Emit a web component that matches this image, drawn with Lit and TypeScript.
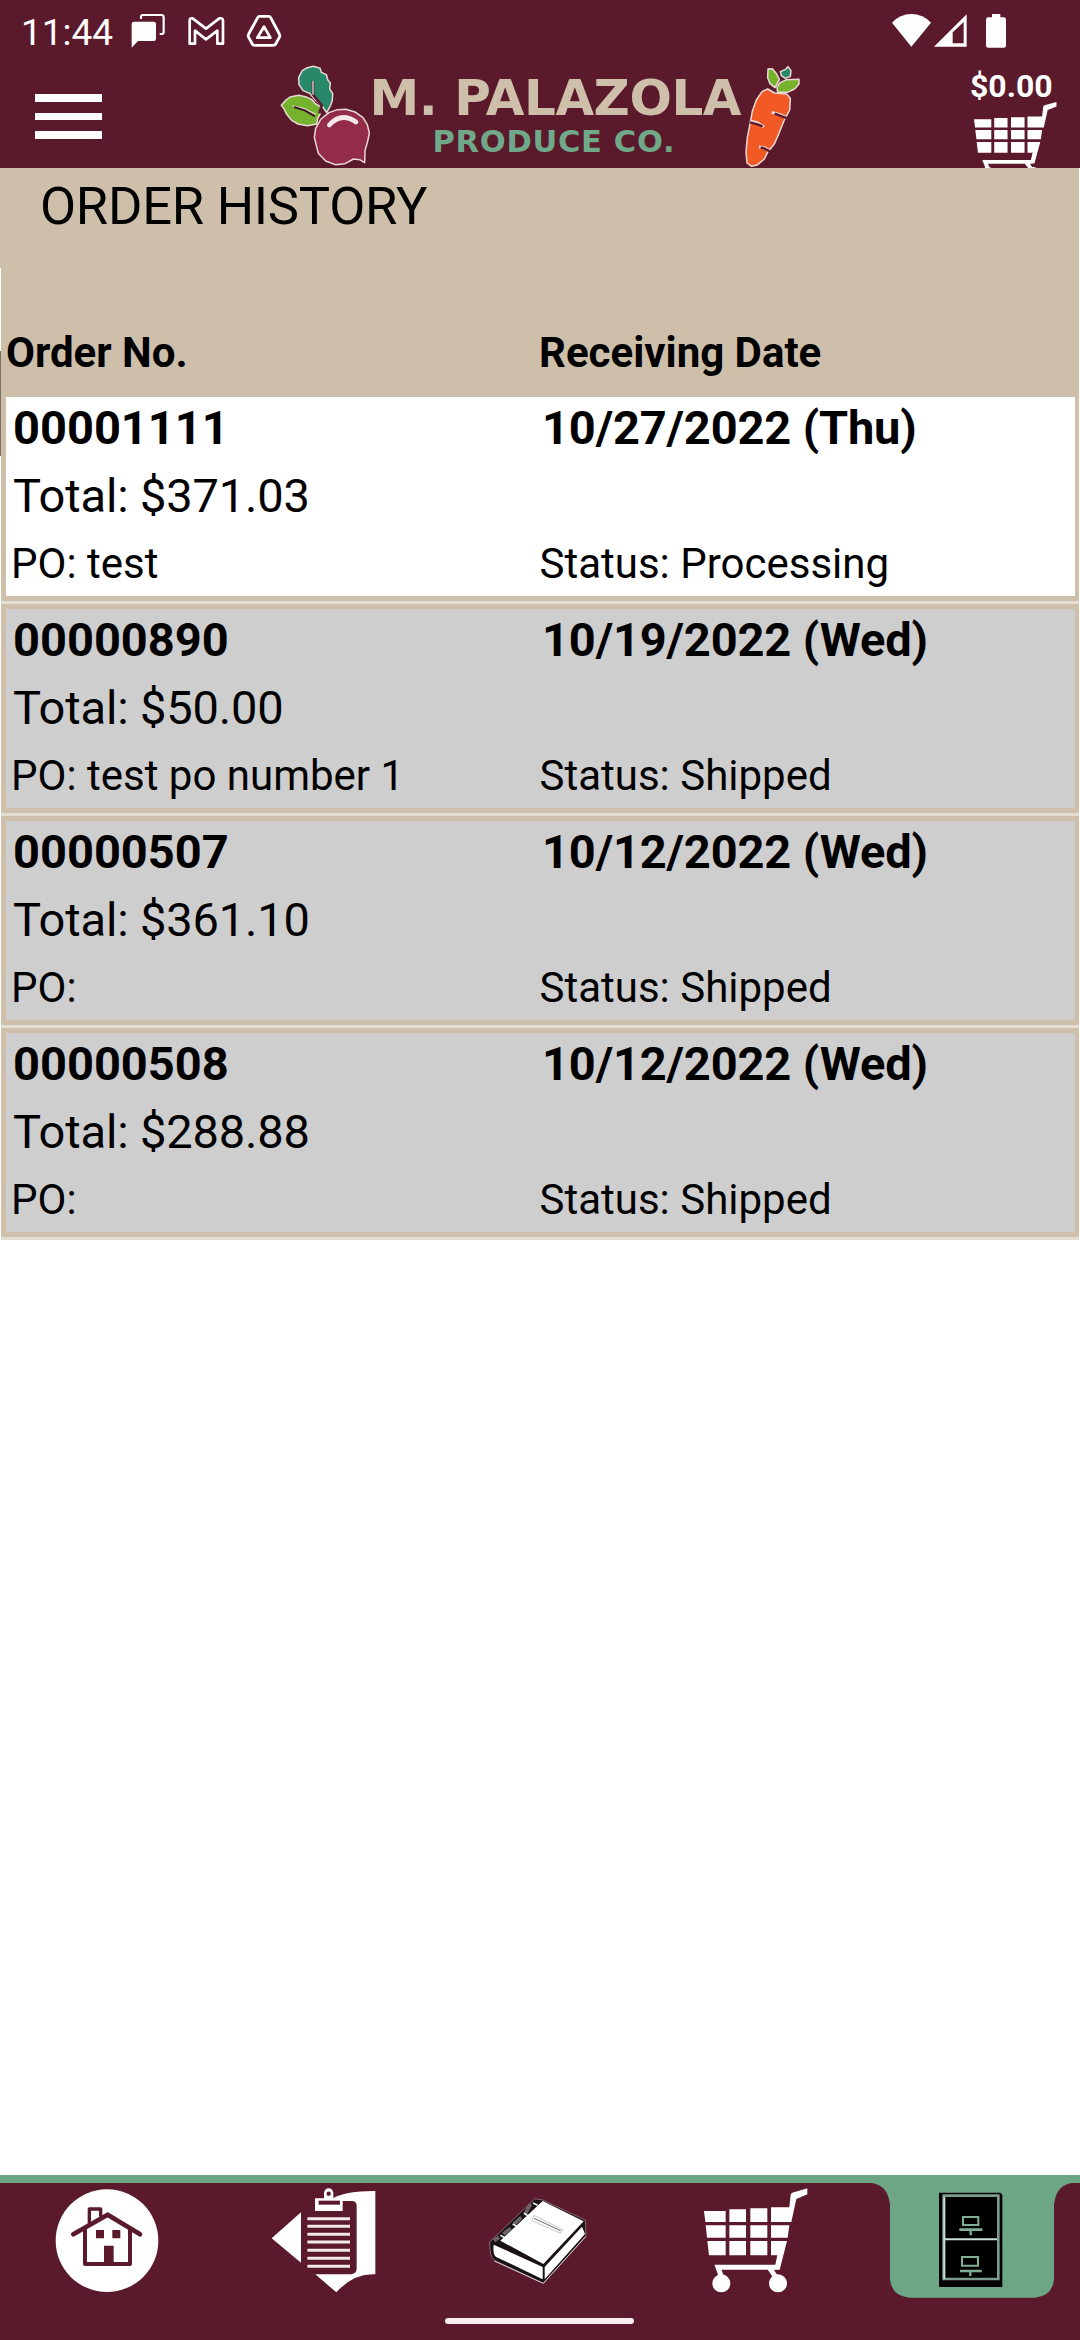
import { LitElement, html, css, svg } from "lit";
import { customElement } from "lit/decorators.js";
import { classMap } from "lit/directives/class-map.js";

interface Order {
  no: string;
  date: string;
  total: string;
  po: string;
  status: string;
}

const ORDERS: Order[] = [
  { no: "00001111", date: "10/27/2022 (Thu)", total: "$371.03", po: "test", status: "Processing" },
  { no: "00000890", date: "10/19/2022 (Wed)", total: "$50.00", po: "test po number 1", status: "Shipped" },
  { no: "00000507", date: "10/12/2022 (Wed)", total: "$361.10", po: "", status: "Shipped" },
  { no: "00000508", date: "10/12/2022 (Wed)", total: "$288.88", po: "", status: "Shipped" },
];

const cartShape = svg`
  <g fill="#fff">
    <path d="M912 153H977V186H916ZM988 148H1038V186H988ZM1051 145H1102V186H1051ZM1113 142H1168L1172 104Q1173 100 1177 98L1222 85V103L1189 117L1174 186H1113Z"/>
    <path d="M917 196H977V233H921ZM988 196H1038V233H988ZM1051 196H1102V233H1051ZM1113 196H1168L1163 233H1113Z"/>
    <path d="M922 243H977V286H927ZM988 243H1038V286H988ZM1051 243H1102V286H1051ZM1113 243H1161L1139 329H1123L1132 286H1113Z"/>
    <circle cx="964" cy="370" r="27"/>
    <circle cx="1134" cy="370" r="27"/>
  </g>
  <path d="M964 350L954 322H1128M1110 326L1128 352" fill="none" stroke="#fff" stroke-width="15"/>`;

@customElement("status-bar")
class StatusBar extends LitElement {
  static styles = css`
    :host { display: flex; height: 62px; align-items: flex-start; color: #fff; }
    .time { margin-left: 21px; width: 109px; font-size: 37px; line-height: 66px; white-space: nowrap; }
    .icons { display: block; }
    .spacer { flex: 1; }
  `;
  render() {
    return html`
      <span class="time">11:44</span>
      <svg class="icons" width="155" height="62" viewBox="390 0 465 186">
        <path d="M423 57V51Q423 45 429 45H484Q491 45 491 52V96Q491 102 485 102H479" fill="none" stroke="#fff" stroke-width="6.5"/>
        <path d="M402 65H461Q468 65 468 72V116Q468 123 461 123H414L395 143V72Q395 65 402 65Z" fill="#fff"/>
        <path d="M569 131V62Q569 53 578 55L618 86L658 55Q669 53 669 62V131H652V92L618 118L585 92V131Z" fill="none" stroke="#fff" stroke-width="8" stroke-linejoin="round"/>
        <path d="M778 49H806Q810 49 812 53L838 102Q841 107 838 112L827 132Q825 136 820 136H763Q759 136 757 132L746 112Q743 107 746 102L773 53Q775 49 778 49Z" fill="none" stroke="#fff" stroke-width="8.5"/>
        <path d="M792 80L811 113H772Z" fill="none" stroke="#fff" stroke-width="8.5" stroke-linejoin="round"/>
      </svg>
      <span class="spacer"></span>
      <svg class="icons" width="220" height="62" viewBox="0 0 660 186">
        <path d="M96 68Q120 42 154 42Q189 42 213 68L154 140Z" fill="#fff"/>
        <path d="M222 140L320 43V140ZM278 97V130H311V66Z" fill="#fff" fill-rule="evenodd"/>
        <path d="M396 42H421V52H431Q438 52 438 59V137Q438 143 431 143H385Q378 143 378 137V59Q378 52 385 52H396Z" fill="#fff"/>
      </svg>
    `;
  }
}

@customElement("app-header")
class AppHeader extends LitElement {
  static styles = css`
    :host { display: flex; height: 106px; overflow: hidden; align-items: flex-start; color: #fff; }
    .menu { display: flex; flex-direction: column; gap: 11px; margin: 32px 0 0 35px; width: 67px; }
    .line { height: 7.6px; background: #fff; }
    .logo { display: block; margin-left: 173px; }
    .cart { margin-left: auto; width: 110px; display: flex; flex-direction: column; }
    .amount { height: 40px; font-size: 32px; font-weight: 700; line-height: 48px; white-space: nowrap; }
    .basket { display: block; margin-left: 4px; flex: none; }
  `;
  render() {
    return html`
      <div class="menu"><div class="line"></div><div class="line"></div><div class="line"></div></div>
      <svg class="logo" width="535" height="106" viewBox="275 62 535 106">
        <g transform="translate(270 50) scale(.33333)" stroke="#ead9d6" stroke-width="4.5" stroke-linejoin="round">
          <path d="M87 104L86 82L97 62L112 53L130 49L150 55L154 67L169 74L174 91L181 99L179 117L188 130L187 151L182 166L170 188L154 165L134 148L119 130L99 122Z" fill="#28896a"/>
          <path d="M34 166L46 152L60 141L86 136L107 140L126 149L137 162L151 169V191L143 206L140 222L112 227L84 222L65 211L50 193L43 178Z" fill="#74b32b"/>
          <path d="M133 262L137 235L153 207L177 188L202 179L228 178L257 187L279 203L292 224L298 249L293 274L285 302L284 338L269 329L251 327L225 341L196 344L167 333L145 310Z" fill="#932c48"/>
          <path d="M129 93V134L155 166L148 190" fill="none" stroke="#5a1a2b" stroke-width="8"/>
          <path d="M129 93V134M68 168L106 177L137 193" fill="none" stroke-width="4"/>
          <path d="M72 171L104 181L135 199" fill="none" stroke="#43152a" stroke-width="6"/>
          <path d="M178 225Q214 185 258 216" fill="none" stroke="#f6e7ea" stroke-width="14" stroke-linecap="round"/>
        </g>
        <text class="name" x="369.5" y="115.3" font-family="DejaVu Sans" font-weight="700" font-size="50" textLength="372" fill="#cebfab">M. PALAZOLA</text>
        <text class="sub" x="432.5" y="152" font-family="DejaVu Sans" font-weight="700" font-size="30.5" textLength="242" fill="#70a98a">PRODUCE CO.</text>
        <g transform="translate(540 50) scale(.33333)" stroke="#ead9d6" stroke-width="4.5" stroke-linejoin="round">
          <path d="M683 117L704 129L740 132L751 145L749 180L732 212L717 250L703 282L684 305L673 327L653 344L635 349L621 339L618 307L622 262L630 222L637 184L649 150L666 125Z" fill="#f15a24"/>
          <path d="M684 57L697 56L710 72L718 89L705 113L690 101L683 83Z" fill="#74b32b"/>
          <path d="M721 65L737 58L744 50L753 62L751 79L736 85L724 77Z" fill="#28896a"/>
          <path d="M711 112L720 98L740 89L777 88V102L764 117L742 127L713 127Z" fill="#74b32b"/>
          <path d="M695 187L718 193L738 202M632 214L652 218L672 231M657 290L672 293L687 301" fill="none" stroke-width="9"/>
          <path d="M704 191L720 197L742 205M630 217L652 223L668 229M662 292L674 296L689 304" fill="none" stroke="#5a1a2b" stroke-width="7"/>
        </g>
      </svg>
      <div class="cart">
        <span class="amount">$0.00</span>
        <svg class="basket" width="82.5" height="79" viewBox="912 85 310 313" preserveAspectRatio="none">${cartShape}</svg>
      </div>
    `;
  }
}

@customElement("order-card")
class OrderCard extends LitElement {
  static properties = { order: { attribute: false }, open: { type: Boolean } };
  declare order: Order;
  declare open: boolean;
  static styles = css`
    :host { display: block; border-bottom: 3px solid #e4ddd5; }
    .card {
      display: grid; grid-template-columns: 533.5px 1fr; grid-template-rows: 68px 68px 63px;
      border: 5px solid #cebfab; border-right-width: 4px; background: #cecece;
      line-height: 61px; font-size: 42px; white-space: nowrap; color: #000;
    }
    .open { background: #fff; }
    .key { font-size: 47px; font-weight: 700; padding-left: 7px; }
    .date { letter-spacing: -0.15px; padding-left: 2.5px; }
    .total { font-size: 47px; letter-spacing: -0.15px; grid-column: 1 / -1; padding-left: 7px; }
    .po { padding-left: 5px; }
  `;
  render() {
    const o = this.order;
    return html`
      <div class=${classMap({ card: true, open: this.open })}>
        <span class="key">${o.no}</span>
        <span class="key date">${o.date}</span>
        <span class="total">Total: ${o.total}</span>
        <span class="po">PO: ${o.po}</span>
        <span class="status">Status: ${o.status}</span>
      </div>
    `;
  }
}

@customElement("bottom-nav")
class BottomNav extends LitElement {
  static styles = css`
    :host {
      display: grid; grid-template-columns: repeat(5, 216px); height: 165px; position: relative;
      background: linear-gradient(#6ca684 0 8px, #5a1a2b 8px);
    }
    .tab { display: block; }
    .handle {
      position: absolute; left: 445px; bottom: 16px; width: 189px; height: 6px;
      border-radius: 3px; background: #f7ecef;
    }
  `;
  render() {
    return html`
      <svg class="tab" width="216" height="165" viewBox="0 45 648 495">
        <circle cx="321" cy="242" r="154" fill="#fff"/>
        <g fill="none" stroke="#5a1a2b" stroke-linejoin="round">
          <path d="M255 208V312H390V208" stroke-width="12"/>
          <path d="M268 196V147H302V170" stroke-width="10"/>
          <path d="M220 223L323 164L420 223" stroke-width="14" stroke-linecap="round"/>
        </g>
        <path d="M288 210H312V235H288ZM337 210H361V235H337ZM312 257H341V314H312Z" fill="#5a1a2b"/>
      </svg>
      <svg class="tab" width="216" height="165" viewBox="648 45 648 495">
        <g fill="#fff">
          <path d="M903 157V308L815 235Z"/>
          <path d="M1000 114Q1042 92 1126 93V343Q1060 340 1009 397L946 343H1054Q1070 341 1070 325V138Q1070 123 1055 123H1028Z"/>
          <path d="M945 115H972V99Q974 85 986 85Q998 85 1000 99V115H1028V153H945Z"/>
        </g>
        <circle cx="986" cy="101" r="6.5" fill="#5a1a2b"/>
        <path d="M956 122H1020V134H956Z" fill="#5a1a2b"/>
        <path d="M922 176H1050M922 199H1050M922 223H1050M922 246H1050M922 271H1050M922 295H1050M922 319H1050" stroke="#f3e8eb" stroke-width="9"/>
      </svg>
      <svg class="tab" width="216" height="165" viewBox="96 45 648 495">
        <path d="M405 116L428 120L556 180L558 228L430 370L283 301Q268 290 269 246Z" fill="#1a1316" stroke="#8b6b75" stroke-width="3" stroke-linejoin="round"/>
        <path d="M392 132L374 164M364 172L342 192M332 205L310 222M297 232L282 242" stroke="#6d6468" stroke-width="11"/>
        <path d="M399 129L413 136M372 160L384 167M338 192L352 200M301 226L316 234" stroke="#eee" stroke-width="5"/>
        <path d="M428 123L551 184L430 312L301 242Z" fill="#fff"/>
        <path d="M281 254L428 321V358L287 290Q278 280 281 254Z" fill="#fff"/>
        <path d="M434 321L546 200L555 222L434 358Z" fill="#fff"/>
        <path d="M283 303L430 370L557 230" fill="none" stroke="#d8cfd2" stroke-width="3"/>
        <path d="M402 166L490 210L482 220L396 182Z" fill="#fff" stroke="#c8c8c8" stroke-width="3"/>
        <path d="M402 175L482 212" stroke="#666" stroke-width="3"/>
      </svg>
      <svg class="tab" width="216" height="165" viewBox="744 45 648 495">${cartShape}</svg>
      <svg class="tab" width="216" height="165" viewBox="72 45 648 495">
        <path d="M72 45H720V69H696Q648 75 642 135V356Q638 408 585 413H208Q154 408 150 356V135Q144 75 94 69H72Z" fill="#6ca684"/>
        <path d="M297 98H481L487 104V381H297Z" fill="#000"/>
        <path d="M311 107H475V357H311Z" fill="none" stroke="#7c9c8b" stroke-width="8"/>
        <path d="M313 112V357M311 238H471" stroke="#c9e0d2" stroke-width="6"/>
        <g fill="none" stroke="#7fae95">
          <path d="M369 171H415V195H369ZM366 291H414V317H366Z" stroke-width="6"/>
          <path d="M358 209H427M360 333H425" stroke-width="8"/>
          <path d="M392 212V226M391 336V348" stroke-width="7"/>
        </g>
      </svg>
      <div class="handle"></div>
    `;
  }
}

@customElement("app-root")
class AppRoot extends LitElement {
  static styles = css`
    :host {
      display: flex; flex-direction: column; width: 1080px; height: 2340px;
      background: #fff; font-family: Roboto, "Liberation Sans", sans-serif; overflow: hidden;
    }
    .top { background: #5a1a2b; height: 168px; flex: none; }
    .title {
      height: 100px; margin-right: 1px; padding-left: 40px; background: #cebfab; letter-spacing: -0.25px;
      font-size: 52.5px; line-height: 76px; color: #000; flex: none; box-sizing: border-box;
    }
    .table { flex: 1; position: relative; padding: 0 1px; }
    .heads {
      display: grid; grid-template-columns: 533px 1fr; height: 124px; box-sizing: border-box;
      padding: 54px 0 0 5px; background: #cebfab; font-size: 42px; font-weight: 700; line-height: 61px;
    }
    .edge { position: absolute; left: 0; top: 83px; width: 1px; height: 105px; background: #7d7062; }
  `;
  render() {
    return html`
      <div class="top">
        <status-bar></status-bar>
        <app-header></app-header>
      </div>
      <div class="title">ORDER HISTORY</div>
      <div class="table">
        <div class="edge"></div>
        <div class="heads"><span>Order No.</span><span>Receiving Date</span></div>
        ${ORDERS.map((o, i) => html`<order-card .order=${o} ?open=${i === 0}></order-card>`)}
      </div>
      <bottom-nav></bottom-nav>
    `;
  }
}
